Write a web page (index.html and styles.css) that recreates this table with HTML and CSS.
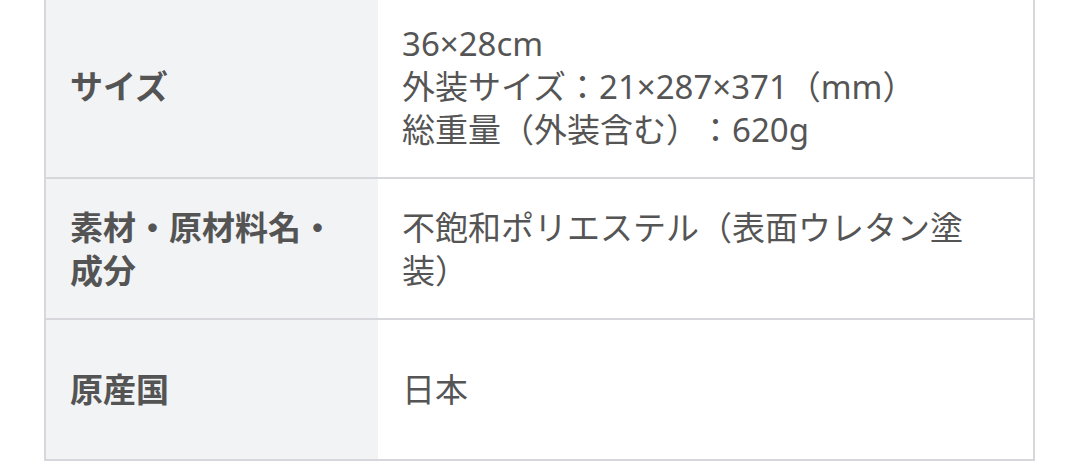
FILE: index.html
```html
<!DOCTYPE html>
<html lang="ja">
<head>
<meta charset="utf-8">
<link rel="stylesheet" href="styles.css">
</head>
<body>
<div class="spec">
  <div class="row">
    <div class="th">サイズ</div>
    <div class="td"><span>36×28cm<br>外装サイズ：21×287×371（mm）<br>総重量（外装含む）：620g</span></div>
  </div>
  <div class="row">
    <div class="th">素材・原材料名・成分</div>
    <div class="td"><span>不飽和ポリエステル（表面ウレタン塗装）</span></div>
  </div>
  <div class="row">
    <div class="th">原産国</div>
    <div class="td"><span>日本</span></div>
  </div>
</div>
</body>
</html>
```

FILE: styles.css
```css
html, body {
  margin: 0;
  padding: 0;
  background: #ffffff;
}
body {
  font-family: "Noto Sans", "Noto Sans CJK JP", sans-serif;
  font-size: 33px;
  line-height: 43px;
  color: #555555;
  text-spacing-trim: space-all;
}
.spec {
  width: 987px;
  margin: -4px 0 0 44px;
  border-left: 2px solid #d6d6db;
  border-right: 2px solid #d6d6db;
}
.row {
  display: grid;
  grid-template-columns: 332px 1fr;
  border-bottom: 2px solid #d6d6db;
}
.th, .td {
  display: flex;
  align-items: center;
  min-height: 139px;
  padding: 26px 40px 26px 24px;
  box-sizing: border-box;
}
.th {
  background: #f2f3f5;
  font-weight: 700;
  color: #545454;
}
.td {
  background: #ffffff;
}
```
